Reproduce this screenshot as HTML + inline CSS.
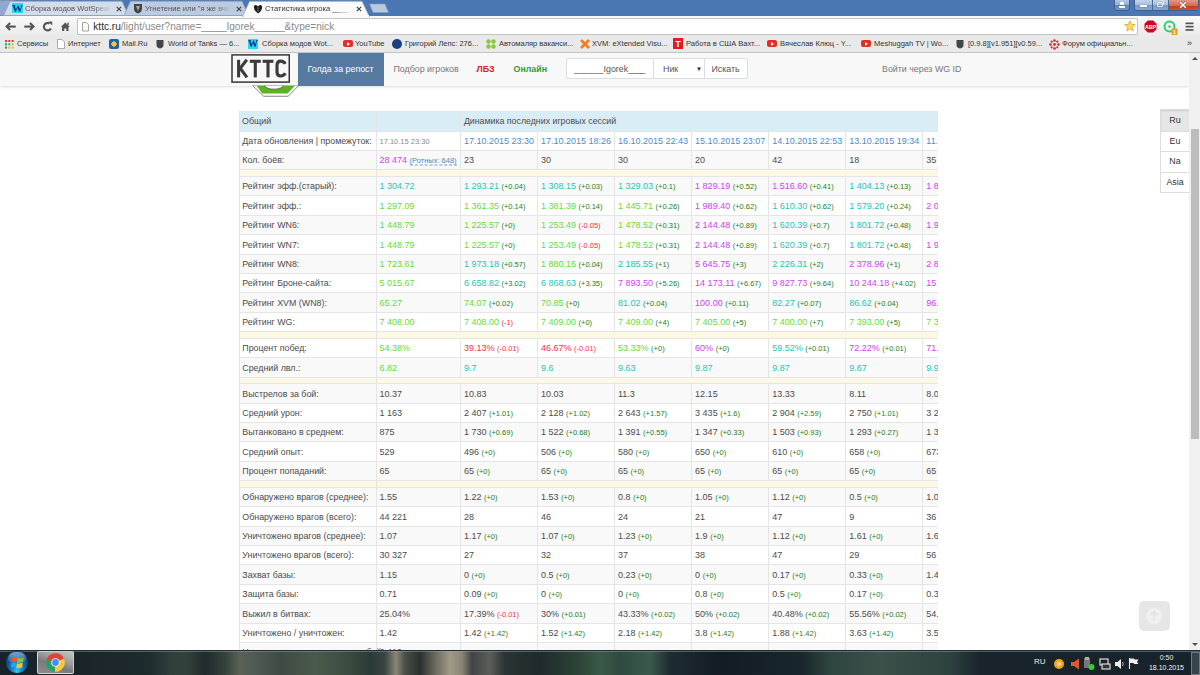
<!DOCTYPE html>
<html><head><meta charset="utf-8"><title>KTTC</title>
<style>
*{box-sizing:border-box}
html,body{margin:0;padding:0}
body{width:1200px;height:675px;overflow:hidden;position:relative;background:#fff;font-family:"Liberation Sans",sans-serif;color:#333}
.abs{position:absolute}
#frame{position:absolute;left:0;top:0;width:1200px;height:16px;background:#4a76b1}
#toolbar{position:absolute;left:0;top:15.5px;width:1200px;height:21.5px;background:linear-gradient(#fafafa,#e9e9e9)}
#bmbar{position:absolute;left:0;top:37px;width:1200px;height:15.5px;background:#e9e9e9;border-bottom:1px solid #c4c4c4}
#page{position:absolute;left:0;top:52.5px;width:1189px;height:597.5px;background:#fff;overflow:hidden}
#navbar{position:absolute;left:0;top:0;width:1189px;height:33px;background:#f8f8f8;box-shadow:0 1px 3px rgba(0,0,0,0.14)}
#sb{position:absolute;left:1189px;top:52.5px;width:11px;height:597.5px;background:#f0f0f0}
#thumb{position:absolute;left:1.5px;top:76.5px;width:8px;height:310px;background:#bcbcbc}
#taskbar{position:absolute;z-index:10;left:0;top:650px;width:1200px;height:25px;background:linear-gradient(90deg,#18222a 0px,#1a2428 75px,#1e2c2e 150px,#2e3e3a 170px,#34423c 185px,#202a2c 205px,#34423a 225px,#5a6258 240px,#4e5a52 255px,#3e4a42 280px,#4a5a4c 315px,#3a4a40 350px,#2a3a36 370px,#3a4440 385px,#8a8676 396px,#4a4e48 405px,#2a3030 420px,#6a685c 435px,#a09a88 450px,#8a8474 462px,#404444 472px,#5a5e5a 490px,#2a3434 505px,#1e2a2c 540px,#2e4438 580px,#3a5a48 600px,#2e4a40 620px,#3a5a4c 650px,#1e2c30 670px,#121c22 720px,#18262a 800px,#2e4440 830px,#3a5048 880px,#2e4240 950px,#18242a 980px,#18222a 1200px)}
#tbl{position:absolute;overflow:hidden}
#tbl .r{position:absolute;left:0;width:740px}
#tbl .t{position:absolute;top:calc(50% + 0.25px);transform:translateY(-50%);white-space:nowrap;font-size:9px;line-height:11px;color:#4c4c4c}
#tbl .sm{font-size:7.5px}
#tbl .lb{font-size:8.85px}
#tbl .t.sm{font-size:7.5px}
#tbl .gr{color:#8a8a8a}
#tbl .bl{color:#4a8cd0}
#tbl .abbr{color:#428bca;border-bottom:1px dashed #6a9fd8}
#tbl .hl{position:absolute;left:0;width:740px;height:1px;background:#e5e5e5}
#tbl .vl{position:absolute;width:1px;background:#e5e5e5}
.nav{position:absolute;font-size:8.85px;line-height:11px;white-space:nowrap}
.bm{position:absolute;top:37.7px;font-size:7.5px;line-height:11px;color:#333;white-space:nowrap}
.tab{position:absolute;font-size:7.6px;line-height:11px;white-space:nowrap;color:#333}

</style></head><body>
<div id="frame"></div>
<div id="toolbar"></div>
<svg class="abs" style="left:0;top:0" width="14" height="16"><polygon points="0,0 11,0 4.5,15.5 0,15.5" fill="#8eaad2"/><rect x="0" y="0" width="1200" height="1" fill="#7d93b5"/></svg>
<svg class="abs" style="left:0;top:0" width="400" height="17">
 <polygon points="3.5,15.5 10,1.2 122,1.2 128.5,15.5" fill="#d3dce9" stroke="#8fa3c0" stroke-width="0.8"/>
 <polygon points="124,15.5 130.5,1.2 242,1.2 248.5,15.5" fill="#bccbe0" stroke="#8fa3c0" stroke-width="0.8"/>
 <polygon points="242.5,16.8 249.5,1.2 362,1.2 369.5,16.8" fill="#fafafa" stroke="#8fa3c0" stroke-width="0.8"/><rect x="243.5" y="15" width="125.5" height="2" fill="#fafafa"/>
 <polygon points="369.5,4 385,4 388.5,12.5 373,12.5" fill="#b9c9de" stroke="#7f9cc4" stroke-width="0.6"/>
</svg>
<div class="abs" style="left:12px;top:3px;width:11px;height:10px;background:#1edcf2"></div>
<div class="abs" style="left:12px;top:2px;width:11px;font:bold 11px 'Liberation Serif',serif;color:#1b2a80;text-align:center;line-height:12px">W</div>
<div class="tab" style="left:25px;top:2.5px;color:#555;width:86px;overflow:hidden;-webkit-mask-image:linear-gradient(90deg,#000 80%,transparent)">Сборка модов WotSpeak</div>
<svg class="abs" style="left:115.5px;top:5.5px" width="6" height="6"><path d="M0.8,0.8 L5.2,5.2 M5.2,0.8 L0.8,5.2" stroke="#444" stroke-width="1.2"/></svg>
<svg class="abs" style="left:133px;top:3px" width="10" height="11"><path d="M1,1 L9,1 L9,6 Q9,9 5,10.5 Q1,9 1,6 Z" fill="#444"/><path d="M3,3 L7,3 L5,8Z" fill="#aaa"/></svg>
<div class="tab" style="left:145px;top:2.5px;color:#555;width:86px;overflow:hidden;-webkit-mask-image:linear-gradient(90deg,#000 80%,transparent)">Угнетение или "я же вчера"</div>
<svg class="abs" style="left:235.5px;top:5.5px" width="6" height="6"><path d="M0.8,0.8 L5.2,5.2 M5.2,0.8 L0.8,5.2" stroke="#444" stroke-width="1.2"/></svg>
<svg class="abs" style="left:253px;top:3.5px" width="10" height="10"><path d="M1,2 Q2.5,0.5 4,1.5 L5,2.5 L6,1.5 Q7.5,0.5 9,2 Q9.8,6 5,9.6 Q0.2,6 1,2 Z" fill="#1e1e1e"/><path d="M5,3 V8" stroke="#777" stroke-width="0.9"/></svg>
<div class="tab" style="left:265px;top:2.5px;color:#333;width:86px;overflow:hidden;-webkit-mask-image:linear-gradient(90deg,#000 80%,transparent)">Статистика игрока _____|</div>
<svg class="abs" style="left:355.5px;top:5.5px" width="6" height="6"><path d="M0.8,0.8 L5.2,5.2 M5.2,0.8 L0.8,5.2" stroke="#444" stroke-width="1.2"/></svg>
<!-- window controls -->
<div class="abs" style="left:1114px;top:-2px;width:16px;height:13px;border:1px solid #3f5f8c;border-radius:0 0 3px 3px;background:linear-gradient(#bcd0ea,#93b0d6 50%,#5f86bd 51%,#6f94c8)"></div>
<div class="abs" style="left:1120.3px;top:2.3px;width:3.6px;height:3px;background:#fff;border-radius:1px"></div><div class="abs" style="left:1118.8px;top:5.8px;width:6.6px;height:1.8px;background:#fff;box-shadow:0 0 1px #567"></div>
<div class="abs" style="left:1133.5px;top:-2px;width:65px;height:13px;border:1px solid #3f5f8c;border-radius:0 0 3px 3px;overflow:hidden;background:linear-gradient(#c7d7ee,#a9c0e0 50%,#7398cc 51%,#86a6d4)">
 <div class="abs" style="left:33.5px;top:0;width:30px;height:13px;background:linear-gradient(#e8a091,#d9694f 50%,#c43a1e 51%,#d85a3b)"></div>
 <div class="abs" style="left:17px;top:0;width:1px;height:13px;background:#4a6a94"></div>
 <div class="abs" style="left:33.5px;top:0;width:1px;height:13px;background:#4a6a94"></div>
 <div class="abs" style="left:5px;top:6px;width:7px;height:2px;background:#fff;box-shadow:0 0 1px #333"></div>
 <div class="abs" style="left:22.5px;top:2.5px;width:5.5px;height:5.5px;border:1.5px solid #f0f0f0;box-shadow:0 0 1px #333;border-radius:1px"></div><div class="abs" style="left:24px;top:1.3px;width:5px;height:5px;border-top:1px solid #ddd;border-right:1px solid #ddd"></div>
 <svg class="abs" style="left:44.5px;top:1.5px" width="8" height="8"><path d="M1.2,1.2 L6.8,6.8 M6.8,1.2 L1.2,6.8" stroke="#555" stroke-width="2.6"/><path d="M1.2,1.2 L6.8,6.8 M6.8,1.2 L1.2,6.8" stroke="#fff" stroke-width="1.6"/></svg>
</div>
<!-- nav buttons -->
<svg class="abs" style="left:4px;top:20px" width="70" height="14">
 <g stroke="#555" stroke-width="2.1" fill="none" stroke-linecap="butt" stroke-linejoin="miter">
 <path d="M6.1,3.1 L2.6,6.6 L6.1,10.1"/><path d="M3,6.6 H11.7"/>
 <path d="M26,3.1 L29.5,6.6 L26,10.1"/><path d="M29,6.6 H20.3"/>
 <path d="M45.6,3.6 A3.7,3.7 0 1 0 46.9,8.4"/>
 </g>
 <path d="M44.2,1.6 L48.2,1.6 L48.2,5.6 Z" fill="#555"/>
 <path d="M56.8,7.1 L61.3,2.4 L65.8,7.1 Z" fill="#555"/>
 <path d="M58.1,6.5 H64.5 V11 H62.3 V8.4 H60.3 V11 H58.1 Z" fill="#555"/>
 <rect x="63.4" y="2.5" width="1.3" height="2.8" fill="#555"/>
</svg>
<div class="abs" style="left:77px;top:18px;width:1060.5px;height:16.8px;background:#fff;border:1px solid #c4c4c4;border-radius:1px"></div>
<svg class="abs" style="left:82px;top:22px" width="8" height="10"><path d="M0.5,0.5 L4.5,0.5 L6.5,2.5 L6.5,9 L0.5,9 Z" fill="#f6f6f6" stroke="#9a9a9a" stroke-width="0.9"/></svg>
<div class="abs" style="left:93.3px;top:19.8px;font-size:10.1px;line-height:14px;color:#8a8a8a;white-space:nowrap"><span style="color:#2a2a2a">kttc.ru</span>/light/user?name=<span style="letter-spacing:-0.6px">_____</span>Igorek<span style="letter-spacing:-0.6px">______</span>&amp;type=nick</div>
<svg class="abs" style="left:1124px;top:20px" width="12" height="12"><path d="M6,0.8 L7.5,4.3 L11.3,4.6 L8.4,7.1 L9.3,10.9 L6,8.9 L2.7,10.9 L3.6,7.1 L0.7,4.6 L4.5,4.3 Z" fill="#f6de5c" stroke="#d9a63a" stroke-width="0.8"/></svg>
<svg class="abs" style="left:1143.5px;top:20px" width="13" height="13"><polygon points="3.8,0.5 9.2,0.5 12.5,3.8 12.5,9.2 9.2,12.5 3.8,12.5 0.5,9.2 0.5,3.8" fill="#d0051b"/><text x="6.5" y="8.6" font-size="5.2" font-weight="bold" fill="#fff" text-anchor="middle" font-family="Liberation Sans">ABP</text></svg>
<svg class="abs" style="left:1163px;top:20px" width="16" height="16"><circle cx="6.5" cy="6.5" r="5" fill="none" stroke="#2ecf6a" stroke-width="2"/><circle cx="6.5" cy="6.5" r="1.3" fill="#2ecf6a"/><rect x="8.5" y="8.5" width="6" height="6.5" rx="1" fill="#e19a2a"/><text x="11.5" y="14" font-size="6" font-weight="bold" fill="#fff" text-anchor="middle" font-family="Liberation Sans">1</text></svg>
<svg class="abs" style="left:1185px;top:22px" width="10" height="10"><rect x="0.5" y="0.5" width="8" height="1.7" fill="#555"/><rect x="0.5" y="3.8" width="8" height="1.7" fill="#555"/><rect x="0.5" y="7.1" width="8" height="1.7" fill="#555"/></svg>
<div id="bmbar"></div>
<!-- bookmarks -->
<svg class="abs" style="left:5px;top:39.5px" width="9" height="9">
 <rect x="0" y="0" width="2" height="2" fill="#e33"/><rect x="3.3" y="0" width="2" height="2" fill="#e33"/><rect x="6.6" y="0" width="2" height="2" fill="#e33"/>
 <rect x="0" y="3.3" width="2" height="2" fill="#2a2"/><rect x="3.3" y="3.3" width="2" height="2" fill="#39f"/><rect x="6.6" y="3.3" width="2" height="2" fill="#fb0"/>
 <rect x="0" y="6.6" width="2" height="2" fill="#2a2"/><rect x="3.3" y="6.6" width="2" height="2" fill="#fb0"/><rect x="6.6" y="6.6" width="2" height="2" fill="#fb0"/>
</svg>
<div class="bm" style="left:17px">Сервисы</div>
<svg class="abs" style="left:57px;top:38.5px" width="8" height="10"><path d="M0.5,0.5 L5,0.5 L7.5,3 L7.5,9.5 L0.5,9.5 Z" fill="#fff" stroke="#999" stroke-width="0.8"/></svg>
<div class="bm" style="left:68px">Интернет</div>
<div class="abs" style="left:109px;top:38.5px;width:10px;height:10px;border-radius:2px;background:radial-gradient(#f5c33b 35%,#1e5fae 40%)"></div>
<div class="bm" style="left:122px">Mail.Ru</div>
<svg class="abs" style="left:156px;top:38.5px" width="8" height="10"><path d="M0.5,1 L7.5,1 L7.5,6 Q7.5,8.5 4,9.5 Q0.5,8.5 0.5,6 Z" fill="#444"/></svg>
<div class="bm" style="left:168px">World of Tanks — 6...</div>
<div class="abs" style="left:248px;top:38.5px;width:10px;height:10px;background:#1edcf2"></div>
<div class="abs" style="left:248px;top:37.5px;width:10px;font:bold 10px 'Liberation Serif',serif;color:#1b2a80;text-align:center;line-height:12px">W</div>
<div class="bm" style="left:262px">Сборка модов Wot...</div>
<div class="abs" style="left:343px;top:40px;width:10px;height:7px;border-radius:2px;background:#e52d27"></div><div class="abs" style="left:346.8px;top:42px;width:0;height:0;border-left:3px solid #fff;border-top:2px solid transparent;border-bottom:2px solid transparent"></div>
<div class="bm" style="left:355px">YouTube</div>
<div class="abs" style="left:392px;top:38.5px;width:10px;height:10px;border-radius:50%;background:#1b3f80"></div>
<div class="bm" style="left:405px">Григорий Лепс: 276...</div>
<svg class="abs" style="left:486px;top:38.5px" width="10" height="10"><circle cx="2.5" cy="2.5" r="2.2" fill="#8cc63f"/><circle cx="7.5" cy="2.5" r="2.2" fill="#8cc63f"/><circle cx="2.5" cy="7.5" r="2.2" fill="#8cc63f"/><circle cx="7.5" cy="7.5" r="2.2" fill="#8cc63f"/></svg>
<div class="bm" style="left:499px">Автомаляр ваканси...</div>
<svg class="abs" style="left:580px;top:38.5px" width="10" height="10"><path d="M1,1 L9,9 M9,1 L1,9" stroke="#f47b20" stroke-width="2.6"/></svg>
<div class="bm" style="left:592px">XVM: eXtended Visu...</div>
<div class="abs" style="left:673px;top:38px;width:10px;height:11px;background:#e21b23"></div>
<div class="abs" style="left:673px;top:37.5px;width:10px;font:bold 9px 'Liberation Sans',sans-serif;color:#fff;text-align:center;line-height:12px">T</div>
<div class="bm" style="left:686px">Работа в США Вахт...</div>
<div class="abs" style="left:767px;top:40px;width:10px;height:7px;border-radius:2px;background:#e52d27"></div><div class="abs" style="left:770.8px;top:42px;width:0;height:0;border-left:3px solid #fff;border-top:2px solid transparent;border-bottom:2px solid transparent"></div>
<div class="bm" style="left:780px">Вячеслав Клюц - Y...</div>
<div class="abs" style="left:861px;top:40px;width:10px;height:7px;border-radius:2px;background:#e52d27"></div><div class="abs" style="left:864.8px;top:42px;width:0;height:0;border-left:3px solid #fff;border-top:2px solid transparent;border-bottom:2px solid transparent"></div>
<div class="bm" style="left:874px">Meshuggah TV | Wo...</div>
<svg class="abs" style="left:956px;top:38.5px" width="8" height="10"><path d="M0.5,1 L7.5,1 L7.5,6 Q7.5,8.5 4,9.5 Q0.5,8.5 0.5,6 Z" fill="#444"/></svg>
<div class="bm" style="left:968px">[0.9.8][v1.951][v0.59...</div>
<svg class="abs" style="left:1049px;top:38.5px" width="11" height="11"><g fill="#e8202a"><circle cx="5.5" cy="1.5" r="1.3"/><circle cx="5.5" cy="9.5" r="1.3"/><circle cx="1.5" cy="5.5" r="1.3"/><circle cx="9.5" cy="5.5" r="1.3"/><circle cx="2.7" cy="2.7" r="1.1"/><circle cx="8.3" cy="8.3" r="1.1"/><circle cx="8.3" cy="2.7" r="1.1"/><circle cx="2.7" cy="8.3" r="1.1"/><circle cx="5.5" cy="5.5" r="1.4"/></g></svg>
<div class="bm" style="left:1062px">Форум официальн...</div>
<div class="bm" style="left:1187px;font-size:9px">»</div>
<div id="page">
 <div id="navbar"></div>
</div>
<!-- logo -->
<svg class="abs" style="left:228px;top:52px" width="76" height="46">
 <polygon points="24.5,33.4 35.75,44.25 60.3,44.25 70.75,33.4" fill="#fff" stroke="#6a6a6a" stroke-width="0.8"/>
 <polygon points="28.5,33.4 67.2,33.4 59.6,41.4 34.2,41.4" fill="#5fb31c"/>
 <path d="M36.6,33.2 A9.35,4 0 0 0 55.3,33.2 Z" fill="#fafafa" stroke="#4a4a4a" stroke-width="0.7"/>
 <rect x="0" y="1" width="70" height="32.4" fill="#f8f8f8"/>
 <rect x="4" y="2.9" width="57.25" height="27.2" fill="#f8f8f8" stroke="#363636" stroke-width="1.5"/>
 <g stroke="#3b3b3b" fill="none" stroke-width="3.1">
  <path d="M10.6,7.8 V25.4"/><path d="M18.8,7.8 L12.2,16.3 L19,25.4"/>
  <path d="M21.8,9.3 H32.8"/><path d="M27.3,9.3 V25.4"/>
  <path d="M34.6,9.3 H45.4"/><path d="M40,9.3 V25.4"/>
  <path d="M57.2,11.8 Q56,9.1 52.6,9.1 Q49,9.1 49,13.2 V20 Q49,24 52.6,24 Q56,24 57.2,21.2"/>
 </g>
</svg>
<div class="abs" style="left:298px;top:52.8px;width:86px;height:33px;background:#56799f"></div>
<div class="nav" style="left:307.5px;top:63.6px;color:#fff">Голда за репост</div>
<div class="nav" style="left:393.5px;top:63.6px;color:#777">Подбор игроков</div>
<div class="nav" style="left:476.5px;top:63.6px;color:#d4202c;font-weight:bold">ЛБЗ</div>
<div class="nav" style="left:513.5px;top:63.6px;color:#2ca02c;font-weight:bold">Онлайн</div>
<div class="abs" style="left:566px;top:58.3px;width:181.5px;height:20.7px;background:#fff;border:1px solid #dcdcdc;border-radius:2px"></div>
<div class="abs" style="left:652.5px;top:58.3px;width:1px;height:20.7px;background:#dcdcdc"></div>
<div class="abs" style="left:704px;top:58.3px;width:1px;height:20.7px;background:#dcdcdc"></div>
<div class="nav" style="left:574px;top:63.6px;color:#555">______Igorek<span style="letter-spacing:-0.8px">____</span></div>
<div class="nav" style="left:663px;top:63.6px;color:#555">Ник</div>
<div class="nav" style="left:696px;top:63.6px;color:#222;font-size:6px">▼</div>
<div class="nav" style="left:711.5px;top:63.6px;color:#555">Искать</div>
<div class="nav" style="left:882px;top:63.6px;color:#777">Войти через WG ID</div>
<!-- lang selector -->
<div class="abs" style="left:1159.5px;top:109px;width:30px;height:83.5px;background:#fff;border:1px solid #ddd;border-right:none">
 <div class="abs" style="left:0;top:0;width:29px;height:20.5px;background:#e6e6e6;box-shadow:inset 0 1px 2px rgba(0,0,0,.1)"></div>
 <div class="abs" style="left:0;top:20.5px;width:29px;height:1px;background:#ddd"></div>
 <div class="abs" style="left:0;top:41px;width:29px;height:1px;background:#ddd"></div>
 <div class="abs" style="left:0;top:61.5px;width:29px;height:1px;background:#ddd"></div>
 <div class="nav" style="left:0;width:29px;text-align:center;top:5px;color:#333">Ru</div>
 <div class="nav" style="left:0;width:29px;text-align:center;top:25.5px;color:#333">Eu</div>
 <div class="nav" style="left:0;width:29px;text-align:center;top:46px;color:#333">Na</div>
 <div class="nav" style="left:0;width:29px;text-align:center;top:66.5px;color:#333">Asia</div>
</div>
<!-- scroll to top -->
<div class="abs" style="left:1139px;top:601px;width:31px;height:30px;border-radius:5px;background:#e6e6e6"></div>
<svg class="abs" style="left:1144px;top:606px" width="20" height="20"><circle cx="10" cy="10" r="8" fill="#f0f0f0"/><path d="M10,5.5 L10,14.5 M6.5,9 L10,5.5 L13.5,9" stroke="#e2e2e2" stroke-width="1.8" fill="none"/></svg>
<div id="sb"><div id="thumb"></div>
 <div class="abs" style="left:2.5px;top:4px;width:0;height:0;border-left:3px solid transparent;border-right:3px solid transparent;border-bottom:3px solid #505050"></div>
 <div class="abs" style="left:2.5px;top:590px;width:0;height:0;border-left:3px solid transparent;border-right:3px solid transparent;border-top:3px solid #505050"></div>
</div>
<div id="taskbar">
 <div class="abs" style="left:0;top:0;width:1200px;height:1px;background:#222c34"></div>
 <div class="abs" style="left:0;top:1px;width:1200px;height:1.2px;background:rgba(150,165,180,0.45)"></div>
 <svg class="abs" style="left:4px;top:650px;display:none" width="1" height="1"></svg>
 <div class="abs" style="left:5.7px;top:1.3px;width:22px;height:22px;border-radius:50%;background:radial-gradient(ellipse at 50% 95%,#2ad0f8 0%,#1a88c8 30%,#0e4c8a 70%,#0a2e58 100%);box-shadow:0 0 1px 0.5px rgba(20,40,60,.8)"></div>
 <div class="abs" style="left:7.5px;top:2.3px;width:18.4px;height:9.5px;border-radius:9px 9px 4px 4px;background:linear-gradient(rgba(255,255,255,.45),rgba(255,255,255,.1))"></div>
 <svg class="abs" style="left:11px;top:5.7px" width="13" height="14"><path d="M1.2,1.8 Q3.6,0.6 6,1.6 L5.3,6.2 Q3,5.2 0.5,6.3 Z" fill="#f0582a"/><path d="M6.7,1.9 Q9.3,2.9 12.6,1.4 L11.9,6 Q8.9,7.3 6,6.4 Z" fill="#86c23a"/><path d="M0.4,7.1 Q2.9,6 5.2,7 L4.5,11.6 Q2.2,10.6 -0.3,11.7 Z" fill="#2ea2ee"/><path d="M5.9,7.2 Q8.6,8.2 11.8,6.8 L11.1,11.4 Q8.1,12.7 5.2,11.8 Z" fill="#fcc21b"/></svg>
 <div class="abs" style="left:37.3px;top:1px;width:36.7px;height:22.7px;border:1px solid rgba(230,230,230,0.75);border-radius:2px;background:linear-gradient(200deg,#c4c4c4,#9a9a9a 40%,#7a7a7a 60%,#8e8e8e)"></div>
 <svg class="abs" style="left:46.2px;top:2.8px" width="19" height="19"><path d="M9.5,9.5 L0.52,7.09 A9.3,9.3 0 0 1 17.93,5.57 Z" fill="#db4437"/><path d="M9.5,9.5 L17.93,5.57 A9.3,9.3 0 0 1 8.69,18.76 Z" fill="#fcc934"/><path d="M9.5,9.5 L8.69,18.76 A9.3,9.3 0 0 1 0.52,7.09 Z" fill="#1fa463"/><circle cx="9.5" cy="9.5" r="4.3" fill="#fff"/><circle cx="9.5" cy="9.5" r="3.4" fill="#4a8af4"/></svg>
 <div class="abs" style="left:1034px;top:6.5px;font-size:8px;line-height:10px;color:#e8e8e8">RU</div>
 <div class="abs" style="left:1054px;top:8.5px;width:10px;height:10px;border-radius:50%;background:#f7a21b"></div>
 <div class="abs" style="left:1057px;top:11.5px;width:4px;height:4px;border-radius:50%;border:1.3px solid #fff"></div>
 <svg class="abs" style="left:1070px;top:7.5px" width="10" height="12"><path d="M1,4 L4,4 L9,0.5 L9,11.5 L4,8 L1,8 Z" fill="#e05a30"/></svg>
 <svg class="abs" style="left:1083px;top:6.5px" width="12" height="14"><rect x="1" y="1" width="6" height="10" fill="#777"/><rect x="2" y="0" width="4" height="3" fill="#aaa"/><circle cx="8.5" cy="10" r="3" fill="#3c3"/></svg>
 <svg class="abs" style="left:1099px;top:7.5px" width="12" height="12"><rect x="1" y="1" width="8" height="6" fill="none" stroke="#ddd" stroke-width="1.2"/><rect x="3" y="6" width="8" height="5" fill="#333" stroke="#ddd" stroke-width="1.2"/></svg>
 <svg class="abs" style="left:1114px;top:7.5px" width="12" height="12"><path d="M1,4 L3.5,4 L7,1 L7,11 L3.5,8 L1,8 Z" fill="#eee"/><path d="M8.5,4 Q10,6 8.5,8" stroke="#ccc" stroke-width="0.9" fill="none"/></svg>
 <svg class="abs" style="left:1128px;top:6.5px" width="12" height="13"><path d="M1.5,1 L1.5,12" stroke="#eee" stroke-width="1.1"/><path d="M2,1.5 L6,1.5 L6.5,2.5 L10.5,2.5 L9,5 L10.5,7 L6,7 L5.5,6 L2,6 Z" fill="#eee"/></svg>
 <div class="abs" style="left:1146.5px;top:3px;width:40px;text-align:center;font-size:7px;line-height:10px;color:#f0f0f0">0:50<br>18.10.2015</div>
 <div class="abs" style="left:1190.5px;top:2px;width:9.5px;height:23px;border:1px solid rgba(180,190,200,0.45);background:rgba(120,130,135,0.35)"></div>
</div>

<div id="tbl" style="left:239.0px;top:111.0px;width:699px;height:539.0px"><div class="r" style="top:0;height:20.0px;background:#d9edf7"><span class="t lb" style="left:3.1px;margin-top:0.1px">Общий</span><span class="t" style="left:224.90px;margin-top:0.1px;font-size:8.8px">Динамика последних игровых сессий</span></div><div class="r" style="top:20.000px;height:19.375px;background:#ffffff"><span class="t lb" style="left:3.30px">Дата обновления | промежуток:</span><span class="t sm gr" style="left:140.50px">17.10.15 23:30</span><span class="t bl" style="left:224.90px">17.10.2015 23:30</span><span class="t bl" style="left:301.97px">17.10.2015 18:26</span><span class="t bl" style="left:379.04px">16.10.2015 22:43</span><span class="t bl" style="left:456.11px">15.10.2015 23:07</span><span class="t bl" style="left:533.18px">14.10.2015 22:53</span><span class="t bl" style="left:610.25px">13.10.2015 19:34</span><span class="t bl" style="left:687.32px">11.10.2015 21:12</span></div><div class="r" style="top:39.375px;height:19.375px;background:#f9f9f9"><span class="t lb" style="left:3.30px">Кол. боёв:</span><span class="t" style="left:140.50px"><span style="color:#d042f3">28 474</span> <span class="sm abbr">(Ротных: 648)</span></span><span class="t" style="left:224.90px">23</span><span class="t" style="left:301.97px">30</span><span class="t" style="left:379.04px">30</span><span class="t" style="left:456.11px">20</span><span class="t" style="left:533.18px">42</span><span class="t" style="left:610.25px">18</span><span class="t" style="left:687.32px">35</span></div><div class="r" style="top:58.750px;height:6.750px;background:#fcf8e3"></div><div class="r" style="top:65.500px;height:19.375px;background:#f9f9f9"><span class="t lb" style="left:3.30px">Рейтинг эфф.(старый):</span><span class="t" style="left:140.50px"><span style="color:#1cc6b6">1 304.72</span></span><span class="t" style="left:224.90px"><span style="color:#1cc6b6">1 293.21</span> <span class="sm" style="color:#237f23">(+0.04)</span></span><span class="t" style="left:301.97px"><span style="color:#1cc6b6">1 308.15</span> <span class="sm" style="color:#237f23">(+0.03)</span></span><span class="t" style="left:379.04px"><span style="color:#1cc6b6">1 329.03</span> <span class="sm" style="color:#237f23">(+0.1)</span></span><span class="t" style="left:456.11px"><span style="color:#d042f3">1 829.19</span> <span class="sm" style="color:#237f23">(+0.52)</span></span><span class="t" style="left:533.18px"><span style="color:#d042f3">1 516.60</span> <span class="sm" style="color:#237f23">(+0.41)</span></span><span class="t" style="left:610.25px"><span style="color:#1cc6b6">1 404.13</span> <span class="sm" style="color:#237f23">(+0.13)</span></span><span class="t" style="left:687.32px"><span style="color:#d042f3">1 878.50</span> <span class="sm" style="color:#237f23">(+0.3)</span></span></div><div class="r" style="top:84.875px;height:19.375px;background:#ffffff"><span class="t lb" style="left:3.30px">Рейтинг эфф.:</span><span class="t" style="left:140.50px"><span style="color:#64dc3a">1 297.09</span></span><span class="t" style="left:224.90px"><span style="color:#64dc3a">1 361.35</span> <span class="sm" style="color:#237f23">(+0.14)</span></span><span class="t" style="left:301.97px"><span style="color:#64dc3a">1 381.39</span> <span class="sm" style="color:#237f23">(+0.14)</span></span><span class="t" style="left:379.04px"><span style="color:#64dc3a">1 445.71</span> <span class="sm" style="color:#237f23">(+0.26)</span></span><span class="t" style="left:456.11px"><span style="color:#d042f3">1 989.40</span> <span class="sm" style="color:#237f23">(+0.62)</span></span><span class="t" style="left:533.18px"><span style="color:#1cc6b6">1 610.30</span> <span class="sm" style="color:#237f23">(+0.62)</span></span><span class="t" style="left:610.25px"><span style="color:#1cc6b6">1 579.20</span> <span class="sm" style="color:#237f23">(+0.24)</span></span><span class="t" style="left:687.32px"><span style="color:#d042f3">2 012.40</span> <span class="sm" style="color:#237f23">(+0.2)</span></span></div><div class="r" style="top:104.250px;height:19.375px;background:#f9f9f9"><span class="t lb" style="left:3.30px">Рейтинг WN6:</span><span class="t" style="left:140.50px"><span style="color:#64dc3a">1 448.79</span></span><span class="t" style="left:224.90px"><span style="color:#64dc3a">1 225.57</span> <span class="sm" style="color:#237f23">(+0)</span></span><span class="t" style="left:301.97px"><span style="color:#64dc3a">1 253.49</span> <span class="sm" style="color:#f5304e">(-0.05)</span></span><span class="t" style="left:379.04px"><span style="color:#64dc3a">1 478.52</span> <span class="sm" style="color:#237f23">(+0.31)</span></span><span class="t" style="left:456.11px"><span style="color:#d042f3">2 144.48</span> <span class="sm" style="color:#237f23">(+0.89)</span></span><span class="t" style="left:533.18px"><span style="color:#1cc6b6">1 620.39</span> <span class="sm" style="color:#237f23">(+0.7)</span></span><span class="t" style="left:610.25px"><span style="color:#1cc6b6">1 801.72</span> <span class="sm" style="color:#237f23">(+0.48)</span></span><span class="t" style="left:687.32px"><span style="color:#d042f3">1 950.10</span> <span class="sm" style="color:#237f23">(+0.2)</span></span></div><div class="r" style="top:123.625px;height:19.375px;background:#ffffff"><span class="t lb" style="left:3.30px">Рейтинг WN7:</span><span class="t" style="left:140.50px"><span style="color:#64dc3a">1 448.79</span></span><span class="t" style="left:224.90px"><span style="color:#64dc3a">1 225.57</span> <span class="sm" style="color:#237f23">(+0)</span></span><span class="t" style="left:301.97px"><span style="color:#64dc3a">1 253.49</span> <span class="sm" style="color:#f5304e">(-0.05)</span></span><span class="t" style="left:379.04px"><span style="color:#64dc3a">1 478.52</span> <span class="sm" style="color:#237f23">(+0.31)</span></span><span class="t" style="left:456.11px"><span style="color:#d042f3">2 144.48</span> <span class="sm" style="color:#237f23">(+0.89)</span></span><span class="t" style="left:533.18px"><span style="color:#1cc6b6">1 620.39</span> <span class="sm" style="color:#237f23">(+0.7)</span></span><span class="t" style="left:610.25px"><span style="color:#1cc6b6">1 801.72</span> <span class="sm" style="color:#237f23">(+0.48)</span></span><span class="t" style="left:687.32px"><span style="color:#d042f3">1 950.10</span> <span class="sm" style="color:#237f23">(+0.2)</span></span></div><div class="r" style="top:143.000px;height:19.375px;background:#f9f9f9"><span class="t lb" style="left:3.30px">Рейтинг WN8:</span><span class="t" style="left:140.50px"><span style="color:#64dc3a">1 723.61</span></span><span class="t" style="left:224.90px"><span style="color:#1cc6b6">1 973.18</span> <span class="sm" style="color:#237f23">(+0.57)</span></span><span class="t" style="left:301.97px"><span style="color:#64dc3a">1 880.16</span> <span class="sm" style="color:#237f23">(+0.04)</span></span><span class="t" style="left:379.04px"><span style="color:#1cc6b6">2 185.55</span> <span class="sm" style="color:#237f23">(+1)</span></span><span class="t" style="left:456.11px"><span style="color:#d042f3">5 645.75</span> <span class="sm" style="color:#237f23">(+3)</span></span><span class="t" style="left:533.18px"><span style="color:#1cc6b6">2 226.31</span> <span class="sm" style="color:#237f23">(+2)</span></span><span class="t" style="left:610.25px"><span style="color:#d042f3">2 378.96</span> <span class="sm" style="color:#237f23">(+1)</span></span><span class="t" style="left:687.32px"><span style="color:#d042f3">2 850.10</span> <span class="sm" style="color:#237f23">(+1)</span></span></div><div class="r" style="top:162.375px;height:19.375px;background:#ffffff"><span class="t lb" style="left:3.30px">Рейтинг Броне-сайта:</span><span class="t" style="left:140.50px"><span style="color:#64dc3a">5 015.67</span></span><span class="t" style="left:224.90px"><span style="color:#1cc6b6">6 658.82</span> <span class="sm" style="color:#237f23">(+3.02)</span></span><span class="t" style="left:301.97px"><span style="color:#1cc6b6">6 868.63</span> <span class="sm" style="color:#237f23">(+3.35)</span></span><span class="t" style="left:379.04px"><span style="color:#d042f3">7 893.50</span> <span class="sm" style="color:#237f23">(+5.26)</span></span><span class="t" style="left:456.11px"><span style="color:#d042f3">14 173.11</span> <span class="sm" style="color:#237f23">(+6.67)</span></span><span class="t" style="left:533.18px"><span style="color:#d042f3">9 827.73</span> <span class="sm" style="color:#237f23">(+9.64)</span></span><span class="t" style="left:610.25px"><span style="color:#d042f3">10 244.18</span> <span class="sm" style="color:#237f23">(+4.02)</span></span><span class="t" style="left:687.32px"><span style="color:#d042f3">15 100.20</span> <span class="sm" style="color:#237f23">(+4)</span></span></div><div class="r" style="top:181.750px;height:19.375px;background:#f9f9f9"><span class="t lb" style="left:3.30px">Рейтинг XVM (WN8):</span><span class="t" style="left:140.50px"><span style="color:#64dc3a">65.27</span></span><span class="t" style="left:224.90px"><span style="color:#64dc3a">74.07</span> <span class="sm" style="color:#237f23">(+0.02)</span></span><span class="t" style="left:301.97px"><span style="color:#64dc3a">70.85</span> <span class="sm" style="color:#237f23">(+0)</span></span><span class="t" style="left:379.04px"><span style="color:#1cc6b6">81.02</span> <span class="sm" style="color:#237f23">(+0.04)</span></span><span class="t" style="left:456.11px"><span style="color:#d042f3">100.00</span> <span class="sm" style="color:#237f23">(+0.11)</span></span><span class="t" style="left:533.18px"><span style="color:#1cc6b6">82.27</span> <span class="sm" style="color:#237f23">(+0.07)</span></span><span class="t" style="left:610.25px"><span style="color:#1cc6b6">86.62</span> <span class="sm" style="color:#237f23">(+0.04)</span></span><span class="t" style="left:687.32px"><span style="color:#d042f3">96.10</span> <span class="sm" style="color:#237f23">(+0.1)</span></span></div><div class="r" style="top:201.125px;height:19.375px;background:#ffffff"><span class="t lb" style="left:3.30px">Рейтинг WG:</span><span class="t" style="left:140.50px"><span style="color:#64dc3a">7 408.00</span></span><span class="t" style="left:224.90px"><span style="color:#64dc3a">7 408.00</span> <span class="sm" style="color:#f5304e">(-1)</span></span><span class="t" style="left:301.97px"><span style="color:#64dc3a">7 409.00</span> <span class="sm" style="color:#237f23">(+0)</span></span><span class="t" style="left:379.04px"><span style="color:#64dc3a">7 409.00</span> <span class="sm" style="color:#237f23">(+4)</span></span><span class="t" style="left:456.11px"><span style="color:#64dc3a">7 405.00</span> <span class="sm" style="color:#237f23">(+5)</span></span><span class="t" style="left:533.18px"><span style="color:#64dc3a">7 400.00</span> <span class="sm" style="color:#237f23">(+7)</span></span><span class="t" style="left:610.25px"><span style="color:#64dc3a">7 393.00</span> <span class="sm" style="color:#237f23">(+5)</span></span><span class="t" style="left:687.32px"><span style="color:#64dc3a">7 388.00</span> <span class="sm" style="color:#237f23">(+5)</span></span></div><div class="r" style="top:220.500px;height:6.750px;background:#fcf8e3"></div><div class="r" style="top:227.250px;height:19.375px;background:#ffffff"><span class="t lb" style="left:3.30px">Процент побед:</span><span class="t" style="left:140.50px"><span style="color:#64dc3a">54.38%</span></span><span class="t" style="left:224.90px"><span style="color:#f5304e">39.13%</span> <span class="sm" style="color:#f5304e">(-0.01)</span></span><span class="t" style="left:301.97px"><span style="color:#f5304e">46.67%</span> <span class="sm" style="color:#f5304e">(-0.01)</span></span><span class="t" style="left:379.04px"><span style="color:#64dc3a">53.33%</span> <span class="sm" style="color:#237f23">(+0)</span></span><span class="t" style="left:456.11px"><span style="color:#d042f3">60%</span> <span class="sm" style="color:#237f23">(+0)</span></span><span class="t" style="left:533.18px"><span style="color:#1cc6b6">59.52%</span> <span class="sm" style="color:#237f23">(+0.01)</span></span><span class="t" style="left:610.25px"><span style="color:#d042f3">72.22%</span> <span class="sm" style="color:#237f23">(+0.01)</span></span><span class="t" style="left:687.32px"><span style="color:#d042f3">71.43%</span> <span class="sm" style="color:#237f23">(+0.01)</span></span></div><div class="r" style="top:246.625px;height:19.375px;background:#f9f9f9"><span class="t lb" style="left:3.30px">Средний лвл.:</span><span class="t" style="left:140.50px"><span style="color:#64dc3a">6.82</span></span><span class="t" style="left:224.90px"><span style="color:#1cc6b6">9.7</span></span><span class="t" style="left:301.97px"><span style="color:#1cc6b6">9.6</span></span><span class="t" style="left:379.04px"><span style="color:#1cc6b6">9.63</span></span><span class="t" style="left:456.11px"><span style="color:#1cc6b6">9.87</span></span><span class="t" style="left:533.18px"><span style="color:#1cc6b6">9.87</span></span><span class="t" style="left:610.25px"><span style="color:#1cc6b6">9.67</span></span><span class="t" style="left:687.32px"><span style="color:#1cc6b6">9.9</span></span></div><div class="r" style="top:266.000px;height:6.750px;background:#fcf8e3"></div><div class="r" style="top:272.750px;height:19.375px;background:#f9f9f9"><span class="t lb" style="left:3.30px">Выстрелов за бой:</span><span class="t" style="left:140.50px"><span style="color:#4c4c4c">10.37</span></span><span class="t" style="left:224.90px"><span style="color:#4c4c4c">10.83</span></span><span class="t" style="left:301.97px"><span style="color:#4c4c4c">10.03</span></span><span class="t" style="left:379.04px"><span style="color:#4c4c4c">11.3</span></span><span class="t" style="left:456.11px"><span style="color:#4c4c4c">12.15</span></span><span class="t" style="left:533.18px"><span style="color:#4c4c4c">13.33</span></span><span class="t" style="left:610.25px"><span style="color:#4c4c4c">8.11</span></span><span class="t" style="left:687.32px"><span style="color:#4c4c4c">8.06</span></span></div><div class="r" style="top:292.125px;height:19.375px;background:#ffffff"><span class="t lb" style="left:3.30px">Средний урон:</span><span class="t" style="left:140.50px"><span style="color:#4c4c4c">1 163</span></span><span class="t" style="left:224.90px"><span style="color:#4c4c4c">2 407</span> <span class="sm" style="color:#237f23">(+1.01)</span></span><span class="t" style="left:301.97px"><span style="color:#4c4c4c">2 128</span> <span class="sm" style="color:#237f23">(+1.02)</span></span><span class="t" style="left:379.04px"><span style="color:#4c4c4c">2 643</span> <span class="sm" style="color:#237f23">(+1.57)</span></span><span class="t" style="left:456.11px"><span style="color:#4c4c4c">3 435</span> <span class="sm" style="color:#237f23">(+1.6)</span></span><span class="t" style="left:533.18px"><span style="color:#4c4c4c">2 904</span> <span class="sm" style="color:#237f23">(+2.59)</span></span><span class="t" style="left:610.25px"><span style="color:#4c4c4c">2 750</span> <span class="sm" style="color:#237f23">(+1.01)</span></span><span class="t" style="left:687.32px"><span style="color:#4c4c4c">3 204</span> <span class="sm" style="color:#237f23">(+1)</span></span></div><div class="r" style="top:311.500px;height:19.375px;background:#f9f9f9"><span class="t lb" style="left:3.30px">Вытанковано в среднем:</span><span class="t" style="left:140.50px"><span style="color:#4c4c4c">875</span></span><span class="t" style="left:224.90px"><span style="color:#4c4c4c">1 730</span> <span class="sm" style="color:#237f23">(+0.69)</span></span><span class="t" style="left:301.97px"><span style="color:#4c4c4c">1 522</span> <span class="sm" style="color:#237f23">(+0.68)</span></span><span class="t" style="left:379.04px"><span style="color:#4c4c4c">1 391</span> <span class="sm" style="color:#237f23">(+0.55)</span></span><span class="t" style="left:456.11px"><span style="color:#4c4c4c">1 347</span> <span class="sm" style="color:#237f23">(+0.33)</span></span><span class="t" style="left:533.18px"><span style="color:#4c4c4c">1 503</span> <span class="sm" style="color:#237f23">(+0.93)</span></span><span class="t" style="left:610.25px"><span style="color:#4c4c4c">1 293</span> <span class="sm" style="color:#237f23">(+0.27)</span></span><span class="t" style="left:687.32px"><span style="color:#4c4c4c">1 377</span> <span class="sm" style="color:#237f23">(+0)</span></span></div><div class="r" style="top:330.875px;height:19.375px;background:#ffffff"><span class="t lb" style="left:3.30px">Средний опыт:</span><span class="t" style="left:140.50px"><span style="color:#4c4c4c">529</span></span><span class="t" style="left:224.90px"><span style="color:#4c4c4c">496</span> <span class="sm" style="color:#237f23">(+0)</span></span><span class="t" style="left:301.97px"><span style="color:#4c4c4c">506</span> <span class="sm" style="color:#237f23">(+0)</span></span><span class="t" style="left:379.04px"><span style="color:#4c4c4c">580</span> <span class="sm" style="color:#237f23">(+0)</span></span><span class="t" style="left:456.11px"><span style="color:#4c4c4c">650</span> <span class="sm" style="color:#237f23">(+0)</span></span><span class="t" style="left:533.18px"><span style="color:#4c4c4c">610</span> <span class="sm" style="color:#237f23">(+0)</span></span><span class="t" style="left:610.25px"><span style="color:#4c4c4c">658</span> <span class="sm" style="color:#237f23">(+0)</span></span><span class="t" style="left:687.32px"><span style="color:#4c4c4c">673</span> <span class="sm" style="color:#237f23">(+0)</span></span></div><div class="r" style="top:350.250px;height:19.375px;background:#f9f9f9"><span class="t lb" style="left:3.30px">Процент попаданий:</span><span class="t" style="left:140.50px"><span style="color:#4c4c4c">65</span></span><span class="t" style="left:224.90px"><span style="color:#4c4c4c">65</span> <span class="sm" style="color:#237f23">(+0)</span></span><span class="t" style="left:301.97px"><span style="color:#4c4c4c">65</span> <span class="sm" style="color:#237f23">(+0)</span></span><span class="t" style="left:379.04px"><span style="color:#4c4c4c">65</span> <span class="sm" style="color:#237f23">(+0)</span></span><span class="t" style="left:456.11px"><span style="color:#4c4c4c">65</span> <span class="sm" style="color:#237f23">(+0)</span></span><span class="t" style="left:533.18px"><span style="color:#4c4c4c">65</span> <span class="sm" style="color:#237f23">(+0)</span></span><span class="t" style="left:610.25px"><span style="color:#4c4c4c">65</span> <span class="sm" style="color:#237f23">(+0)</span></span><span class="t" style="left:687.32px"><span style="color:#4c4c4c">65</span> <span class="sm" style="color:#237f23">(+0)</span></span></div><div class="r" style="top:369.625px;height:6.750px;background:#fcf8e3"></div><div class="r" style="top:376.375px;height:19.375px;background:#f9f9f9"><span class="t lb" style="left:3.30px">Обнаружено врагов (среднее):</span><span class="t" style="left:140.50px"><span style="color:#4c4c4c">1.55</span></span><span class="t" style="left:224.90px"><span style="color:#4c4c4c">1.22</span> <span class="sm" style="color:#237f23">(+0)</span></span><span class="t" style="left:301.97px"><span style="color:#4c4c4c">1.53</span> <span class="sm" style="color:#237f23">(+0)</span></span><span class="t" style="left:379.04px"><span style="color:#4c4c4c">0.8</span> <span class="sm" style="color:#237f23">(+0)</span></span><span class="t" style="left:456.11px"><span style="color:#4c4c4c">1.05</span> <span class="sm" style="color:#237f23">(+0)</span></span><span class="t" style="left:533.18px"><span style="color:#4c4c4c">1.12</span> <span class="sm" style="color:#237f23">(+0)</span></span><span class="t" style="left:610.25px"><span style="color:#4c4c4c">0.5</span> <span class="sm" style="color:#237f23">(+0)</span></span><span class="t" style="left:687.32px"><span style="color:#4c4c4c">1.06</span> <span class="sm" style="color:#237f23">(+0)</span></span></div><div class="r" style="top:395.750px;height:19.375px;background:#ffffff"><span class="t lb" style="left:3.30px">Обнаружено врагов (всего):</span><span class="t" style="left:140.50px"><span style="color:#4c4c4c">44 221</span></span><span class="t" style="left:224.90px"><span style="color:#4c4c4c">28</span></span><span class="t" style="left:301.97px"><span style="color:#4c4c4c">46</span></span><span class="t" style="left:379.04px"><span style="color:#4c4c4c">24</span></span><span class="t" style="left:456.11px"><span style="color:#4c4c4c">21</span></span><span class="t" style="left:533.18px"><span style="color:#4c4c4c">47</span></span><span class="t" style="left:610.25px"><span style="color:#4c4c4c">9</span></span><span class="t" style="left:687.32px"><span style="color:#4c4c4c">36</span></span></div><div class="r" style="top:415.125px;height:19.375px;background:#f9f9f9"><span class="t lb" style="left:3.30px">Уничтожено врагов (среднее):</span><span class="t" style="left:140.50px"><span style="color:#4c4c4c">1.07</span></span><span class="t" style="left:224.90px"><span style="color:#4c4c4c">1.17</span> <span class="sm" style="color:#237f23">(+0)</span></span><span class="t" style="left:301.97px"><span style="color:#4c4c4c">1.07</span> <span class="sm" style="color:#237f23">(+0)</span></span><span class="t" style="left:379.04px"><span style="color:#4c4c4c">1.23</span> <span class="sm" style="color:#237f23">(+0)</span></span><span class="t" style="left:456.11px"><span style="color:#4c4c4c">1.9</span> <span class="sm" style="color:#237f23">(+0)</span></span><span class="t" style="left:533.18px"><span style="color:#4c4c4c">1.12</span> <span class="sm" style="color:#237f23">(+0)</span></span><span class="t" style="left:610.25px"><span style="color:#4c4c4c">1.61</span> <span class="sm" style="color:#237f23">(+0)</span></span><span class="t" style="left:687.32px"><span style="color:#4c4c4c">1.6</span> <span class="sm" style="color:#237f23">(+0)</span></span></div><div class="r" style="top:434.500px;height:19.375px;background:#ffffff"><span class="t lb" style="left:3.30px">Уничтожено врагов (всего):</span><span class="t" style="left:140.50px"><span style="color:#4c4c4c">30 327</span></span><span class="t" style="left:224.90px"><span style="color:#4c4c4c">27</span></span><span class="t" style="left:301.97px"><span style="color:#4c4c4c">32</span></span><span class="t" style="left:379.04px"><span style="color:#4c4c4c">37</span></span><span class="t" style="left:456.11px"><span style="color:#4c4c4c">38</span></span><span class="t" style="left:533.18px"><span style="color:#4c4c4c">47</span></span><span class="t" style="left:610.25px"><span style="color:#4c4c4c">29</span></span><span class="t" style="left:687.32px"><span style="color:#4c4c4c">56</span></span></div><div class="r" style="top:453.875px;height:19.375px;background:#f9f9f9"><span class="t lb" style="left:3.30px">Захват базы:</span><span class="t" style="left:140.50px"><span style="color:#4c4c4c">1.15</span></span><span class="t" style="left:224.90px"><span style="color:#4c4c4c">0</span> <span class="sm" style="color:#237f23">(+0)</span></span><span class="t" style="left:301.97px"><span style="color:#4c4c4c">0.5</span> <span class="sm" style="color:#237f23">(+0)</span></span><span class="t" style="left:379.04px"><span style="color:#4c4c4c">0.23</span> <span class="sm" style="color:#237f23">(+0)</span></span><span class="t" style="left:456.11px"><span style="color:#4c4c4c">0</span> <span class="sm" style="color:#237f23">(+0)</span></span><span class="t" style="left:533.18px"><span style="color:#4c4c4c">0.17</span> <span class="sm" style="color:#237f23">(+0)</span></span><span class="t" style="left:610.25px"><span style="color:#4c4c4c">0.33</span> <span class="sm" style="color:#237f23">(+0)</span></span><span class="t" style="left:687.32px"><span style="color:#4c4c4c">1.4</span> <span class="sm" style="color:#237f23">(+0)</span></span></div><div class="r" style="top:473.250px;height:19.375px;background:#ffffff"><span class="t lb" style="left:3.30px">Защита базы:</span><span class="t" style="left:140.50px"><span style="color:#4c4c4c">0.71</span></span><span class="t" style="left:224.90px"><span style="color:#4c4c4c">0.09</span> <span class="sm" style="color:#237f23">(+0)</span></span><span class="t" style="left:301.97px"><span style="color:#4c4c4c">0</span> <span class="sm" style="color:#237f23">(+0)</span></span><span class="t" style="left:379.04px"><span style="color:#4c4c4c">0</span> <span class="sm" style="color:#237f23">(+0)</span></span><span class="t" style="left:456.11px"><span style="color:#4c4c4c">0.8</span> <span class="sm" style="color:#237f23">(+0)</span></span><span class="t" style="left:533.18px"><span style="color:#4c4c4c">0.5</span> <span class="sm" style="color:#237f23">(+0)</span></span><span class="t" style="left:610.25px"><span style="color:#4c4c4c">0.17</span> <span class="sm" style="color:#237f23">(+0)</span></span><span class="t" style="left:687.32px"><span style="color:#4c4c4c">0.3</span> <span class="sm" style="color:#237f23">(+0)</span></span></div><div class="r" style="top:492.625px;height:19.375px;background:#f9f9f9"><span class="t lb" style="left:3.30px">Выжил в битвах:</span><span class="t" style="left:140.50px"><span style="color:#4c4c4c">25.04%</span></span><span class="t" style="left:224.90px"><span style="color:#4c4c4c">17.39%</span> <span class="sm" style="color:#f5304e">(-0.01)</span></span><span class="t" style="left:301.97px"><span style="color:#4c4c4c">30%</span> <span class="sm" style="color:#237f23">(+0.01)</span></span><span class="t" style="left:379.04px"><span style="color:#4c4c4c">43.33%</span> <span class="sm" style="color:#237f23">(+0.02)</span></span><span class="t" style="left:456.11px"><span style="color:#4c4c4c">50%</span> <span class="sm" style="color:#237f23">(+0.02)</span></span><span class="t" style="left:533.18px"><span style="color:#4c4c4c">40.48%</span> <span class="sm" style="color:#237f23">(+0.02)</span></span><span class="t" style="left:610.25px"><span style="color:#4c4c4c">55.56%</span> <span class="sm" style="color:#237f23">(+0.02)</span></span><span class="t" style="left:687.32px"><span style="color:#4c4c4c">54.29%</span> <span class="sm" style="color:#237f23">(+0.02)</span></span></div><div class="r" style="top:512.000px;height:19.375px;background:#ffffff"><span class="t lb" style="left:3.30px">Уничтожено / уничтожен:</span><span class="t" style="left:140.50px"><span style="color:#4c4c4c">1.42</span></span><span class="t" style="left:224.90px"><span style="color:#4c4c4c">1.42</span> <span class="sm" style="color:#237f23">(+1.42)</span></span><span class="t" style="left:301.97px"><span style="color:#4c4c4c">1.52</span> <span class="sm" style="color:#237f23">(+1.42)</span></span><span class="t" style="left:379.04px"><span style="color:#4c4c4c">2.18</span> <span class="sm" style="color:#237f23">(+1.42)</span></span><span class="t" style="left:456.11px"><span style="color:#4c4c4c">3.8</span> <span class="sm" style="color:#237f23">(+1.42)</span></span><span class="t" style="left:533.18px"><span style="color:#4c4c4c">1.88</span> <span class="sm" style="color:#237f23">(+1.42)</span></span><span class="t" style="left:610.25px"><span style="color:#4c4c4c">3.63</span> <span class="sm" style="color:#237f23">(+1.42)</span></span><span class="t" style="left:687.32px"><span style="color:#4c4c4c">3.5</span> <span class="sm" style="color:#237f23">(+1.42)</span></span></div><div class="r" style="top:531.375px;height:19.375px;background:#f9f9f9"><span class="t lb" style="left:3.30px">Нанесено максимум урона за бой:</span><span class="t" style="left:140.50px"><span style="color:#4c4c4c">2 419</span></span><span class="t" style="left:224.90px"><span style="color:#4c4c4c"></span></span><span class="t" style="left:301.97px"><span style="color:#4c4c4c"></span></span><span class="t" style="left:379.04px"><span style="color:#4c4c4c"></span></span><span class="t" style="left:456.11px"><span style="color:#4c4c4c"></span></span><span class="t" style="left:533.18px"><span style="color:#4c4c4c"></span></span><span class="t" style="left:610.25px"><span style="color:#4c4c4c"></span></span><span class="t" style="left:687.32px"><span style="color:#4c4c4c"></span></span></div><div class="hl" style="top:-0.500px"></div><div class="hl" style="top:19.500px"></div><div class="hl" style="top:38.875px"></div><div class="hl" style="top:58.250px"></div><div class="hl" style="top:65.000px"></div><div class="hl" style="top:84.375px"></div><div class="hl" style="top:103.750px"></div><div class="hl" style="top:123.125px"></div><div class="hl" style="top:142.500px"></div><div class="hl" style="top:161.875px"></div><div class="hl" style="top:181.250px"></div><div class="hl" style="top:200.625px"></div><div class="hl" style="top:220.000px"></div><div class="hl" style="top:226.750px"></div><div class="hl" style="top:246.125px"></div><div class="hl" style="top:265.500px"></div><div class="hl" style="top:272.250px"></div><div class="hl" style="top:291.625px"></div><div class="hl" style="top:311.000px"></div><div class="hl" style="top:330.375px"></div><div class="hl" style="top:349.750px"></div><div class="hl" style="top:369.125px"></div><div class="hl" style="top:375.875px"></div><div class="hl" style="top:395.250px"></div><div class="hl" style="top:414.625px"></div><div class="hl" style="top:434.000px"></div><div class="hl" style="top:453.375px"></div><div class="hl" style="top:472.750px"></div><div class="hl" style="top:492.125px"></div><div class="hl" style="top:511.500px"></div><div class="hl" style="top:530.875px"></div><div class="hl" style="top:550.250px"></div><div class="vl" style="left:0.000px;top:0.000px;height:20.000px"></div><div class="vl" style="left:136.700px;top:0.000px;height:20.000px"></div><div class="vl" style="left:221.000px;top:0.000px;height:20.000px"></div><div class="vl" style="left:0.000px;top:20.000px;height:19.375px"></div><div class="vl" style="left:136.700px;top:20.000px;height:19.375px"></div><div class="vl" style="left:221.000px;top:20.000px;height:19.375px"></div><div class="vl" style="left:298.070px;top:20.000px;height:19.375px"></div><div class="vl" style="left:375.140px;top:20.000px;height:19.375px"></div><div class="vl" style="left:452.210px;top:20.000px;height:19.375px"></div><div class="vl" style="left:529.280px;top:20.000px;height:19.375px"></div><div class="vl" style="left:606.350px;top:20.000px;height:19.375px"></div><div class="vl" style="left:683.420px;top:20.000px;height:19.375px"></div><div class="vl" style="left:760.490px;top:20.000px;height:19.375px"></div><div class="vl" style="left:0.000px;top:39.375px;height:19.375px"></div><div class="vl" style="left:136.700px;top:39.375px;height:19.375px"></div><div class="vl" style="left:221.000px;top:39.375px;height:19.375px"></div><div class="vl" style="left:298.070px;top:39.375px;height:19.375px"></div><div class="vl" style="left:375.140px;top:39.375px;height:19.375px"></div><div class="vl" style="left:452.210px;top:39.375px;height:19.375px"></div><div class="vl" style="left:529.280px;top:39.375px;height:19.375px"></div><div class="vl" style="left:606.350px;top:39.375px;height:19.375px"></div><div class="vl" style="left:683.420px;top:39.375px;height:19.375px"></div><div class="vl" style="left:760.490px;top:39.375px;height:19.375px"></div><div class="vl" style="left:0.000px;top:58.750px;height:6.750px"></div><div class="vl" style="left:136.700px;top:58.750px;height:6.750px"></div><div class="vl" style="left:0.000px;top:65.500px;height:19.375px"></div><div class="vl" style="left:136.700px;top:65.500px;height:19.375px"></div><div class="vl" style="left:221.000px;top:65.500px;height:19.375px"></div><div class="vl" style="left:298.070px;top:65.500px;height:19.375px"></div><div class="vl" style="left:375.140px;top:65.500px;height:19.375px"></div><div class="vl" style="left:452.210px;top:65.500px;height:19.375px"></div><div class="vl" style="left:529.280px;top:65.500px;height:19.375px"></div><div class="vl" style="left:606.350px;top:65.500px;height:19.375px"></div><div class="vl" style="left:683.420px;top:65.500px;height:19.375px"></div><div class="vl" style="left:760.490px;top:65.500px;height:19.375px"></div><div class="vl" style="left:0.000px;top:84.875px;height:19.375px"></div><div class="vl" style="left:136.700px;top:84.875px;height:19.375px"></div><div class="vl" style="left:221.000px;top:84.875px;height:19.375px"></div><div class="vl" style="left:298.070px;top:84.875px;height:19.375px"></div><div class="vl" style="left:375.140px;top:84.875px;height:19.375px"></div><div class="vl" style="left:452.210px;top:84.875px;height:19.375px"></div><div class="vl" style="left:529.280px;top:84.875px;height:19.375px"></div><div class="vl" style="left:606.350px;top:84.875px;height:19.375px"></div><div class="vl" style="left:683.420px;top:84.875px;height:19.375px"></div><div class="vl" style="left:760.490px;top:84.875px;height:19.375px"></div><div class="vl" style="left:0.000px;top:104.250px;height:19.375px"></div><div class="vl" style="left:136.700px;top:104.250px;height:19.375px"></div><div class="vl" style="left:221.000px;top:104.250px;height:19.375px"></div><div class="vl" style="left:298.070px;top:104.250px;height:19.375px"></div><div class="vl" style="left:375.140px;top:104.250px;height:19.375px"></div><div class="vl" style="left:452.210px;top:104.250px;height:19.375px"></div><div class="vl" style="left:529.280px;top:104.250px;height:19.375px"></div><div class="vl" style="left:606.350px;top:104.250px;height:19.375px"></div><div class="vl" style="left:683.420px;top:104.250px;height:19.375px"></div><div class="vl" style="left:760.490px;top:104.250px;height:19.375px"></div><div class="vl" style="left:0.000px;top:123.625px;height:19.375px"></div><div class="vl" style="left:136.700px;top:123.625px;height:19.375px"></div><div class="vl" style="left:221.000px;top:123.625px;height:19.375px"></div><div class="vl" style="left:298.070px;top:123.625px;height:19.375px"></div><div class="vl" style="left:375.140px;top:123.625px;height:19.375px"></div><div class="vl" style="left:452.210px;top:123.625px;height:19.375px"></div><div class="vl" style="left:529.280px;top:123.625px;height:19.375px"></div><div class="vl" style="left:606.350px;top:123.625px;height:19.375px"></div><div class="vl" style="left:683.420px;top:123.625px;height:19.375px"></div><div class="vl" style="left:760.490px;top:123.625px;height:19.375px"></div><div class="vl" style="left:0.000px;top:143.000px;height:19.375px"></div><div class="vl" style="left:136.700px;top:143.000px;height:19.375px"></div><div class="vl" style="left:221.000px;top:143.000px;height:19.375px"></div><div class="vl" style="left:298.070px;top:143.000px;height:19.375px"></div><div class="vl" style="left:375.140px;top:143.000px;height:19.375px"></div><div class="vl" style="left:452.210px;top:143.000px;height:19.375px"></div><div class="vl" style="left:529.280px;top:143.000px;height:19.375px"></div><div class="vl" style="left:606.350px;top:143.000px;height:19.375px"></div><div class="vl" style="left:683.420px;top:143.000px;height:19.375px"></div><div class="vl" style="left:760.490px;top:143.000px;height:19.375px"></div><div class="vl" style="left:0.000px;top:162.375px;height:19.375px"></div><div class="vl" style="left:136.700px;top:162.375px;height:19.375px"></div><div class="vl" style="left:221.000px;top:162.375px;height:19.375px"></div><div class="vl" style="left:298.070px;top:162.375px;height:19.375px"></div><div class="vl" style="left:375.140px;top:162.375px;height:19.375px"></div><div class="vl" style="left:452.210px;top:162.375px;height:19.375px"></div><div class="vl" style="left:529.280px;top:162.375px;height:19.375px"></div><div class="vl" style="left:606.350px;top:162.375px;height:19.375px"></div><div class="vl" style="left:683.420px;top:162.375px;height:19.375px"></div><div class="vl" style="left:760.490px;top:162.375px;height:19.375px"></div><div class="vl" style="left:0.000px;top:181.750px;height:19.375px"></div><div class="vl" style="left:136.700px;top:181.750px;height:19.375px"></div><div class="vl" style="left:221.000px;top:181.750px;height:19.375px"></div><div class="vl" style="left:298.070px;top:181.750px;height:19.375px"></div><div class="vl" style="left:375.140px;top:181.750px;height:19.375px"></div><div class="vl" style="left:452.210px;top:181.750px;height:19.375px"></div><div class="vl" style="left:529.280px;top:181.750px;height:19.375px"></div><div class="vl" style="left:606.350px;top:181.750px;height:19.375px"></div><div class="vl" style="left:683.420px;top:181.750px;height:19.375px"></div><div class="vl" style="left:760.490px;top:181.750px;height:19.375px"></div><div class="vl" style="left:0.000px;top:201.125px;height:19.375px"></div><div class="vl" style="left:136.700px;top:201.125px;height:19.375px"></div><div class="vl" style="left:221.000px;top:201.125px;height:19.375px"></div><div class="vl" style="left:298.070px;top:201.125px;height:19.375px"></div><div class="vl" style="left:375.140px;top:201.125px;height:19.375px"></div><div class="vl" style="left:452.210px;top:201.125px;height:19.375px"></div><div class="vl" style="left:529.280px;top:201.125px;height:19.375px"></div><div class="vl" style="left:606.350px;top:201.125px;height:19.375px"></div><div class="vl" style="left:683.420px;top:201.125px;height:19.375px"></div><div class="vl" style="left:760.490px;top:201.125px;height:19.375px"></div><div class="vl" style="left:0.000px;top:220.500px;height:6.750px"></div><div class="vl" style="left:136.700px;top:220.500px;height:6.750px"></div><div class="vl" style="left:0.000px;top:227.250px;height:19.375px"></div><div class="vl" style="left:136.700px;top:227.250px;height:19.375px"></div><div class="vl" style="left:221.000px;top:227.250px;height:19.375px"></div><div class="vl" style="left:298.070px;top:227.250px;height:19.375px"></div><div class="vl" style="left:375.140px;top:227.250px;height:19.375px"></div><div class="vl" style="left:452.210px;top:227.250px;height:19.375px"></div><div class="vl" style="left:529.280px;top:227.250px;height:19.375px"></div><div class="vl" style="left:606.350px;top:227.250px;height:19.375px"></div><div class="vl" style="left:683.420px;top:227.250px;height:19.375px"></div><div class="vl" style="left:760.490px;top:227.250px;height:19.375px"></div><div class="vl" style="left:0.000px;top:246.625px;height:19.375px"></div><div class="vl" style="left:136.700px;top:246.625px;height:19.375px"></div><div class="vl" style="left:221.000px;top:246.625px;height:19.375px"></div><div class="vl" style="left:298.070px;top:246.625px;height:19.375px"></div><div class="vl" style="left:375.140px;top:246.625px;height:19.375px"></div><div class="vl" style="left:452.210px;top:246.625px;height:19.375px"></div><div class="vl" style="left:529.280px;top:246.625px;height:19.375px"></div><div class="vl" style="left:606.350px;top:246.625px;height:19.375px"></div><div class="vl" style="left:683.420px;top:246.625px;height:19.375px"></div><div class="vl" style="left:760.490px;top:246.625px;height:19.375px"></div><div class="vl" style="left:0.000px;top:266.000px;height:6.750px"></div><div class="vl" style="left:136.700px;top:266.000px;height:6.750px"></div><div class="vl" style="left:0.000px;top:272.750px;height:19.375px"></div><div class="vl" style="left:136.700px;top:272.750px;height:19.375px"></div><div class="vl" style="left:221.000px;top:272.750px;height:19.375px"></div><div class="vl" style="left:298.070px;top:272.750px;height:19.375px"></div><div class="vl" style="left:375.140px;top:272.750px;height:19.375px"></div><div class="vl" style="left:452.210px;top:272.750px;height:19.375px"></div><div class="vl" style="left:529.280px;top:272.750px;height:19.375px"></div><div class="vl" style="left:606.350px;top:272.750px;height:19.375px"></div><div class="vl" style="left:683.420px;top:272.750px;height:19.375px"></div><div class="vl" style="left:760.490px;top:272.750px;height:19.375px"></div><div class="vl" style="left:0.000px;top:292.125px;height:19.375px"></div><div class="vl" style="left:136.700px;top:292.125px;height:19.375px"></div><div class="vl" style="left:221.000px;top:292.125px;height:19.375px"></div><div class="vl" style="left:298.070px;top:292.125px;height:19.375px"></div><div class="vl" style="left:375.140px;top:292.125px;height:19.375px"></div><div class="vl" style="left:452.210px;top:292.125px;height:19.375px"></div><div class="vl" style="left:529.280px;top:292.125px;height:19.375px"></div><div class="vl" style="left:606.350px;top:292.125px;height:19.375px"></div><div class="vl" style="left:683.420px;top:292.125px;height:19.375px"></div><div class="vl" style="left:760.490px;top:292.125px;height:19.375px"></div><div class="vl" style="left:0.000px;top:311.500px;height:19.375px"></div><div class="vl" style="left:136.700px;top:311.500px;height:19.375px"></div><div class="vl" style="left:221.000px;top:311.500px;height:19.375px"></div><div class="vl" style="left:298.070px;top:311.500px;height:19.375px"></div><div class="vl" style="left:375.140px;top:311.500px;height:19.375px"></div><div class="vl" style="left:452.210px;top:311.500px;height:19.375px"></div><div class="vl" style="left:529.280px;top:311.500px;height:19.375px"></div><div class="vl" style="left:606.350px;top:311.500px;height:19.375px"></div><div class="vl" style="left:683.420px;top:311.500px;height:19.375px"></div><div class="vl" style="left:760.490px;top:311.500px;height:19.375px"></div><div class="vl" style="left:0.000px;top:330.875px;height:19.375px"></div><div class="vl" style="left:136.700px;top:330.875px;height:19.375px"></div><div class="vl" style="left:221.000px;top:330.875px;height:19.375px"></div><div class="vl" style="left:298.070px;top:330.875px;height:19.375px"></div><div class="vl" style="left:375.140px;top:330.875px;height:19.375px"></div><div class="vl" style="left:452.210px;top:330.875px;height:19.375px"></div><div class="vl" style="left:529.280px;top:330.875px;height:19.375px"></div><div class="vl" style="left:606.350px;top:330.875px;height:19.375px"></div><div class="vl" style="left:683.420px;top:330.875px;height:19.375px"></div><div class="vl" style="left:760.490px;top:330.875px;height:19.375px"></div><div class="vl" style="left:0.000px;top:350.250px;height:19.375px"></div><div class="vl" style="left:136.700px;top:350.250px;height:19.375px"></div><div class="vl" style="left:221.000px;top:350.250px;height:19.375px"></div><div class="vl" style="left:298.070px;top:350.250px;height:19.375px"></div><div class="vl" style="left:375.140px;top:350.250px;height:19.375px"></div><div class="vl" style="left:452.210px;top:350.250px;height:19.375px"></div><div class="vl" style="left:529.280px;top:350.250px;height:19.375px"></div><div class="vl" style="left:606.350px;top:350.250px;height:19.375px"></div><div class="vl" style="left:683.420px;top:350.250px;height:19.375px"></div><div class="vl" style="left:760.490px;top:350.250px;height:19.375px"></div><div class="vl" style="left:0.000px;top:369.625px;height:6.750px"></div><div class="vl" style="left:136.700px;top:369.625px;height:6.750px"></div><div class="vl" style="left:0.000px;top:376.375px;height:19.375px"></div><div class="vl" style="left:136.700px;top:376.375px;height:19.375px"></div><div class="vl" style="left:221.000px;top:376.375px;height:19.375px"></div><div class="vl" style="left:298.070px;top:376.375px;height:19.375px"></div><div class="vl" style="left:375.140px;top:376.375px;height:19.375px"></div><div class="vl" style="left:452.210px;top:376.375px;height:19.375px"></div><div class="vl" style="left:529.280px;top:376.375px;height:19.375px"></div><div class="vl" style="left:606.350px;top:376.375px;height:19.375px"></div><div class="vl" style="left:683.420px;top:376.375px;height:19.375px"></div><div class="vl" style="left:760.490px;top:376.375px;height:19.375px"></div><div class="vl" style="left:0.000px;top:395.750px;height:19.375px"></div><div class="vl" style="left:136.700px;top:395.750px;height:19.375px"></div><div class="vl" style="left:221.000px;top:395.750px;height:19.375px"></div><div class="vl" style="left:298.070px;top:395.750px;height:19.375px"></div><div class="vl" style="left:375.140px;top:395.750px;height:19.375px"></div><div class="vl" style="left:452.210px;top:395.750px;height:19.375px"></div><div class="vl" style="left:529.280px;top:395.750px;height:19.375px"></div><div class="vl" style="left:606.350px;top:395.750px;height:19.375px"></div><div class="vl" style="left:683.420px;top:395.750px;height:19.375px"></div><div class="vl" style="left:760.490px;top:395.750px;height:19.375px"></div><div class="vl" style="left:0.000px;top:415.125px;height:19.375px"></div><div class="vl" style="left:136.700px;top:415.125px;height:19.375px"></div><div class="vl" style="left:221.000px;top:415.125px;height:19.375px"></div><div class="vl" style="left:298.070px;top:415.125px;height:19.375px"></div><div class="vl" style="left:375.140px;top:415.125px;height:19.375px"></div><div class="vl" style="left:452.210px;top:415.125px;height:19.375px"></div><div class="vl" style="left:529.280px;top:415.125px;height:19.375px"></div><div class="vl" style="left:606.350px;top:415.125px;height:19.375px"></div><div class="vl" style="left:683.420px;top:415.125px;height:19.375px"></div><div class="vl" style="left:760.490px;top:415.125px;height:19.375px"></div><div class="vl" style="left:0.000px;top:434.500px;height:19.375px"></div><div class="vl" style="left:136.700px;top:434.500px;height:19.375px"></div><div class="vl" style="left:221.000px;top:434.500px;height:19.375px"></div><div class="vl" style="left:298.070px;top:434.500px;height:19.375px"></div><div class="vl" style="left:375.140px;top:434.500px;height:19.375px"></div><div class="vl" style="left:452.210px;top:434.500px;height:19.375px"></div><div class="vl" style="left:529.280px;top:434.500px;height:19.375px"></div><div class="vl" style="left:606.350px;top:434.500px;height:19.375px"></div><div class="vl" style="left:683.420px;top:434.500px;height:19.375px"></div><div class="vl" style="left:760.490px;top:434.500px;height:19.375px"></div><div class="vl" style="left:0.000px;top:453.875px;height:19.375px"></div><div class="vl" style="left:136.700px;top:453.875px;height:19.375px"></div><div class="vl" style="left:221.000px;top:453.875px;height:19.375px"></div><div class="vl" style="left:298.070px;top:453.875px;height:19.375px"></div><div class="vl" style="left:375.140px;top:453.875px;height:19.375px"></div><div class="vl" style="left:452.210px;top:453.875px;height:19.375px"></div><div class="vl" style="left:529.280px;top:453.875px;height:19.375px"></div><div class="vl" style="left:606.350px;top:453.875px;height:19.375px"></div><div class="vl" style="left:683.420px;top:453.875px;height:19.375px"></div><div class="vl" style="left:760.490px;top:453.875px;height:19.375px"></div><div class="vl" style="left:0.000px;top:473.250px;height:19.375px"></div><div class="vl" style="left:136.700px;top:473.250px;height:19.375px"></div><div class="vl" style="left:221.000px;top:473.250px;height:19.375px"></div><div class="vl" style="left:298.070px;top:473.250px;height:19.375px"></div><div class="vl" style="left:375.140px;top:473.250px;height:19.375px"></div><div class="vl" style="left:452.210px;top:473.250px;height:19.375px"></div><div class="vl" style="left:529.280px;top:473.250px;height:19.375px"></div><div class="vl" style="left:606.350px;top:473.250px;height:19.375px"></div><div class="vl" style="left:683.420px;top:473.250px;height:19.375px"></div><div class="vl" style="left:760.490px;top:473.250px;height:19.375px"></div><div class="vl" style="left:0.000px;top:492.625px;height:19.375px"></div><div class="vl" style="left:136.700px;top:492.625px;height:19.375px"></div><div class="vl" style="left:221.000px;top:492.625px;height:19.375px"></div><div class="vl" style="left:298.070px;top:492.625px;height:19.375px"></div><div class="vl" style="left:375.140px;top:492.625px;height:19.375px"></div><div class="vl" style="left:452.210px;top:492.625px;height:19.375px"></div><div class="vl" style="left:529.280px;top:492.625px;height:19.375px"></div><div class="vl" style="left:606.350px;top:492.625px;height:19.375px"></div><div class="vl" style="left:683.420px;top:492.625px;height:19.375px"></div><div class="vl" style="left:760.490px;top:492.625px;height:19.375px"></div><div class="vl" style="left:0.000px;top:512.000px;height:19.375px"></div><div class="vl" style="left:136.700px;top:512.000px;height:19.375px"></div><div class="vl" style="left:221.000px;top:512.000px;height:19.375px"></div><div class="vl" style="left:298.070px;top:512.000px;height:19.375px"></div><div class="vl" style="left:375.140px;top:512.000px;height:19.375px"></div><div class="vl" style="left:452.210px;top:512.000px;height:19.375px"></div><div class="vl" style="left:529.280px;top:512.000px;height:19.375px"></div><div class="vl" style="left:606.350px;top:512.000px;height:19.375px"></div><div class="vl" style="left:683.420px;top:512.000px;height:19.375px"></div><div class="vl" style="left:760.490px;top:512.000px;height:19.375px"></div><div class="vl" style="left:0.000px;top:531.375px;height:19.375px"></div><div class="vl" style="left:136.700px;top:531.375px;height:19.375px"></div><div class="vl" style="left:221.000px;top:531.375px;height:19.375px"></div><div class="vl" style="left:298.070px;top:531.375px;height:19.375px"></div><div class="vl" style="left:375.140px;top:531.375px;height:19.375px"></div><div class="vl" style="left:452.210px;top:531.375px;height:19.375px"></div><div class="vl" style="left:529.280px;top:531.375px;height:19.375px"></div><div class="vl" style="left:606.350px;top:531.375px;height:19.375px"></div><div class="vl" style="left:683.420px;top:531.375px;height:19.375px"></div><div class="vl" style="left:760.490px;top:531.375px;height:19.375px"></div></div>
</body></html>
